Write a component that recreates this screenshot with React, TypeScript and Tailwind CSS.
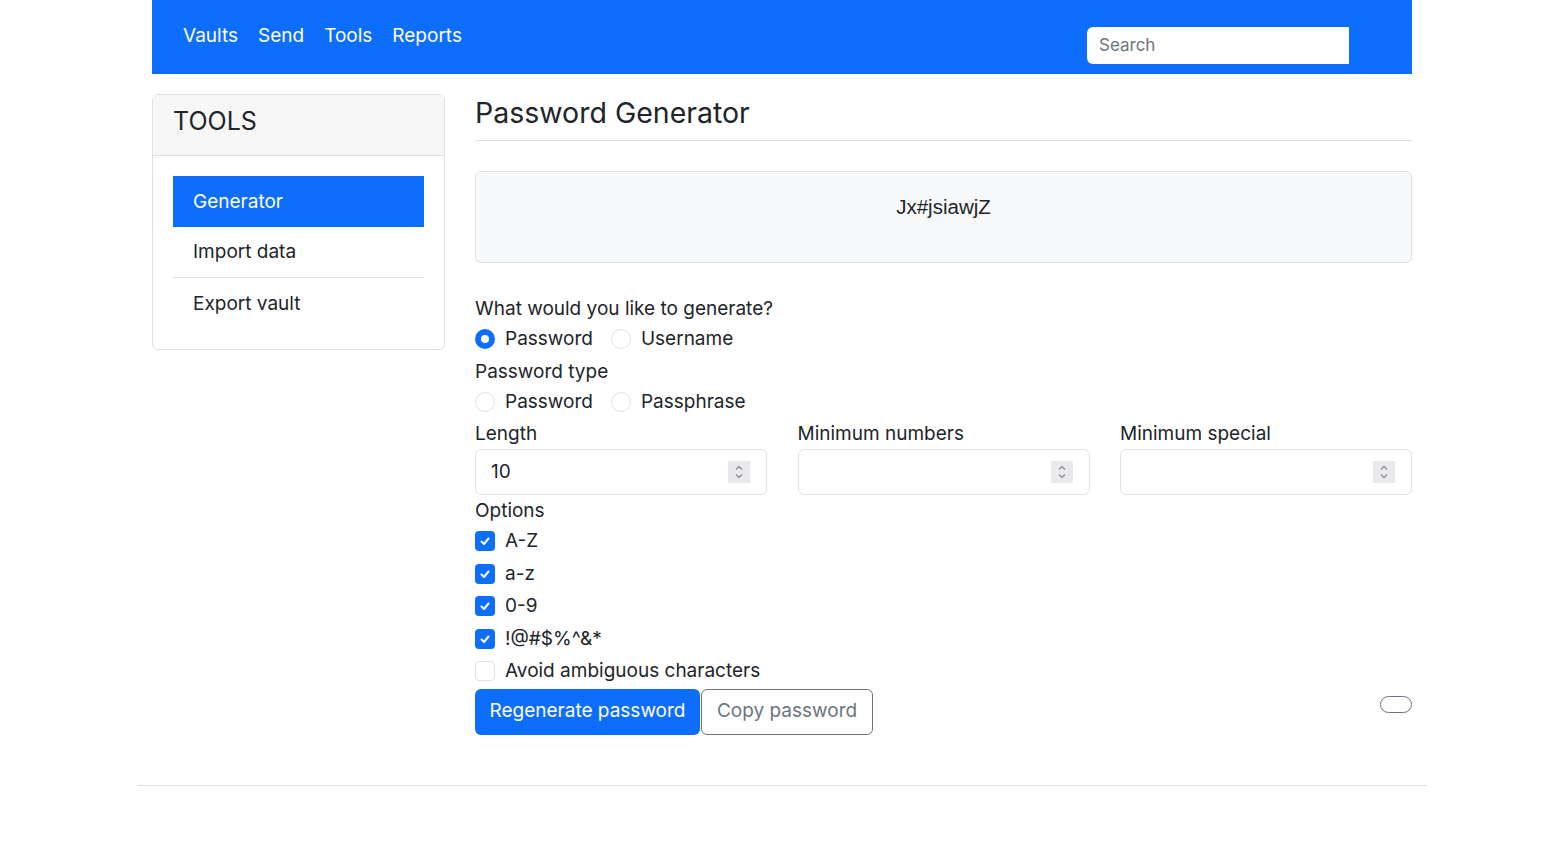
import { useState } from 'react';

const font = "font-['Inter','Noto_Sans',sans-serif]";

function Spinner() {
  return (
    <div className="flex h-[22px] w-[22px] flex-col items-center justify-center bg-[#e9e9ed]">
      <svg width="10" height="18" viewBox="0 0 10 18" fill="none" stroke="#8a8a8a" strokeWidth="1.2">
        <path d="M2 6.5 L5 3.5 L8 6.5" />
        <path d="M2 11.5 L5 14.5 L8 11.5" />
      </svg>
    </div>
  );
}

function Radio({ checked, label }: { checked: boolean; label: string }) {
  return (
    <label className="flex items-center gap-[10px] cursor-pointer">
      {checked ? (
        <span className="flex h-5 w-5 items-center justify-center rounded-full bg-[#0d6efd]">
          <span className="h-2 w-2 rounded-full bg-white" />
        </span>
      ) : (
        <span className="h-5 w-5 rounded-full border border-[#dee2e6] bg-white" />
      )}
      <span>{label}</span>
    </label>
  );
}

function Check({ checked, label }: { checked: boolean; label: string }) {
  return (
    <label className="flex h-[32.5px] items-center gap-[10px] cursor-pointer">
      {checked ? (
        <span className="flex h-5 w-5 items-center justify-center rounded-[4px] bg-[#0d6efd]">
          <svg width="12" height="12" viewBox="0 0 12 12" fill="none" stroke="white" strokeWidth="2" strokeLinecap="round" strokeLinejoin="round">
            <path d="M2.5 6.5 L5 9 L9.5 3.5" />
          </svg>
        </span>
      ) : (
        <span className="h-5 w-5 rounded-[4px] border border-[#dee2e6] bg-white" />
      )}
      <span>{label}</span>
    </label>
  );
}

function NumberField({ label, value }: { label: string; value: string }) {
  return (
    <div className="flex flex-col">
      <div className="h-[31px] leading-[31px]">{label}</div>
      <div className="flex h-[46px] items-center justify-between rounded-[6px] border border-[#dee2e6] bg-white pl-[15px] pr-[16px]">
        <span>{value}</span>
        <Spinner />
      </div>
    </div>
  );
}

export default function App() {
  const [tab] = useState('Generator');
  const options = [
    { label: 'A-Z', checked: true },
    { label: 'a-z', checked: true },
    { label: '0-9', checked: true },
    { label: '!@#$%^&*', checked: true },
    { label: 'Avoid ambiguous characters', checked: false },
  ];

  return (
    <div className={`min-h-[848px] bg-white text-[#212529] text-[19px] ${font}`}>
      {/* Header */}
      <div className="ml-[152px] w-[1260px]">
        <nav className="flex h-[74px] justify-between bg-[#0d6efd] pl-[31px] pr-[63px]">
          <div className="flex items-center gap-[20px] pb-[1px] text-white">
            {['Vaults', 'Send', 'Tools', 'Reports'].map((n) => (
              <a key={n} className="cursor-pointer">{n}</a>
            ))}
          </div>
          <div className="mt-[27px] flex h-[37px] w-[262px] items-center rounded-l-[6px] bg-white pl-[12px] text-[17px] text-[#6c757d]">
            Search
          </div>
        </nav>

        {/* Body */}
        <div className="mt-[20px] flex gap-[30px]">
          {/* Sidebar */}
          <div className="w-[293px] self-start rounded-[6px] border border-[#dee2e6]">
            <div className="flex h-[61px] items-center border-b border-[#dee2e6] bg-[#f7f7f7] pl-[20px] pb-[6px] text-[25px]">
              TOOLS
            </div>
            <div className="px-[20px] pt-[20px] pb-[20px]">
              {['Generator', 'Import data', 'Export vault'].map((item, i) => (
                <div
                  key={item}
                  className={`flex h-[51px] items-center pl-[20px] pt-[1px] ${
                    tab === item ? 'bg-[#0d6efd] text-white' : 'text-[#212529]'
                  } ${i === 1 ? 'border-b border-[#dee2e6]' : ''}`}
                >
                  {item}
                </div>
              ))}
            </div>
          </div>

          {/* Main */}
          <div className="flex-1">
            <h1 className="h-[47px] border-b border-[#dee2e6] text-[28.5px] leading-[38px]">Password Generator</h1>
            <div className="mt-[30px] flex h-[92px] justify-center rounded-[6px] border border-[#dee2e6] bg-[#f8f9fa] pt-[20px] font-['Liberation_Sans',Arial,sans-serif] text-[20.5px]">
              Jx#jsiawjZ
            </div>

            <div className="mt-[30px] leading-[31px]">What would you like to generate?</div>
            <div className="flex h-[30px] items-center gap-[18px]">
              <Radio checked label="Password" />
              <Radio checked={false} label="Username" />
            </div>
            <div className="mt-[2px] leading-[31px]">Password type</div>
            <div className="flex h-[30px] items-center gap-[18px]">
              <Radio checked={false} label="Password" />
              <Radio checked={false} label="Passphrase" />
            </div>

            <div className="mt-[1px] grid grid-cols-3 gap-[30.5px]">
              <NumberField label="Length" value="10" />
              <NumberField label="Minimum numbers" value="" />
              <NumberField label="Minimum special" value="" />
            </div>

            <div className="mt-[1px] h-[29px] leading-[30px]">Options</div>
            <div className="flex flex-col">
              {options.map((o) => (
                <Check key={o.label} checked={o.checked} label={o.label} />
              ))}
            </div>

            <div className="mt-[1px] flex items-start justify-between">
              <div className="flex">
                <button className="h-[46px] rounded-[6px] bg-[#0d6efd] px-[14.5px] text-white">Regenerate password</button>
                <button className="ml-[1px] h-[46px] rounded-[6px] border border-[#6c757d] px-[15px] text-[#6c757d]">Copy password</button>
              </div>
              <button className="mt-[7px] h-[17px] w-[32px] rounded-full border border-[#6c757d]" />
            </div>
          </div>
        </div>
      </div>

      <div className="ml-[137px] mt-[50px] w-[1290px] border-t border-[#dee2e6]" />
    </div>
  );
}
